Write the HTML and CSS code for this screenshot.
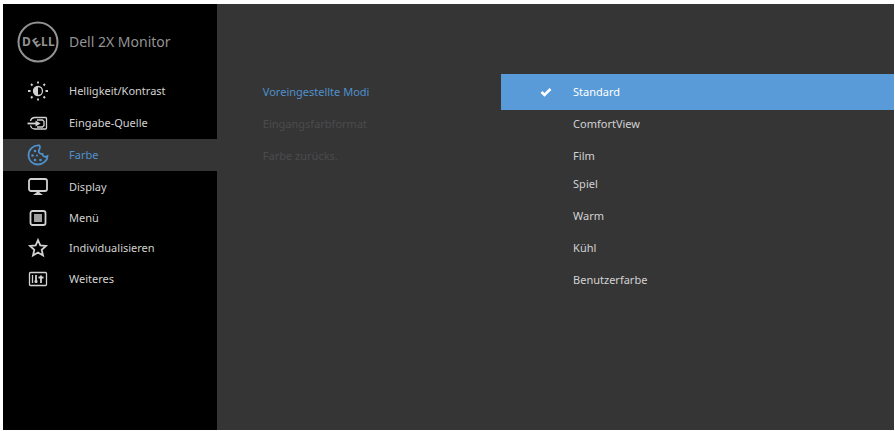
FILE: index.html
```html
<!DOCTYPE html>
<html lang="de">
<head>
<meta charset="utf-8">
<title>Dell 2X Monitor</title>
<link rel="stylesheet" href="styles.css">
</head>
<body>
<main class="osd">
  <aside class="sidebar">
    <header class="brand">
      <svg class="logo" viewBox="0 0 42 42" aria-label="Dell" role="img">
        <circle cx="21" cy="21" r="19.5" fill="none" stroke="currentColor" stroke-width="2"/>
        <text class="wordmark" x="5 19 24 31" y="25 27 25 25" rotate="0 -35 0 0">DELL</text>
      </svg>
      <h1 class="title">Dell 2X Monitor</h1>
    </header>
    <nav class="menu">
      <button class="item" type="button">
        <svg class="icon" viewBox="0 0 22 22"><circle cx="11" cy="11" r="4.500"/><path class="solid" d="M11 6.500a4.500 4.500 0 0 0 0 9z"/><path class="thick" d="M11 1.500v2M11 18.500v2M1 11h2.500M18.500 11h2.500M4 4l1.500 1.500M16.500 16.500L18 18M4 18l1.500-1.500M16.500 5.500L18 4"/></svg>
        <span>Helligkeit/Kontrast</span>
      </button>
      <button class="item" type="button">
        <svg class="icon" viewBox="0 0 22 22"><path d="M3.500 9q.5-3 4-3.500h11q1 0 1 1v9.500q0 1-1 1h-11q-3.500-.5-4-3.500"/><path d="M10 8h5.500l1.500 1.500v4l-1.500 1.500H10"/><path class="thick" d="M.5 11.500h11"/><path class="solid" d="M8.500 8.500l5 3-5 3z"/></svg>
        <span>Eingabe-Quelle</span>
      </button>
      <button class="item active" type="button" aria-current="page">
        <svg class="icon" viewBox="0 0 22 22"><path class="outline" d="M12.500 1.500C6 1 1.500 5.500 1.500 11.500c0 5 4 9 9.500 9 5 0 9.500-4 9.500-8.500-2.500 1.500-5 .5-5-2-3 0-4.500-2-3.500-4 .8-1.500 2-2.500.5-4.500z"/><g class="solid"><circle cx="8" cy="7" r="1.300"/><circle cx="5.500" cy="11.500" r="1.300"/><circle cx="8" cy="16" r="1.300"/><circle cx="13.500" cy="16" r="1.300"/><circle cx="10" cy="11.500" r="1"/></g></svg>
        <span>Farbe</span>
      </button>
      <button class="item" type="button">
        <svg class="icon" viewBox="0 0 22 22"><rect class="outline" x="2" y="3" width="18" height="12" rx="2"/><path class="solid" d="M9.500 15h3v1.500l3.500 2.500H6l3.500-2.500z"/></svg>
        <span>Display</span>
      </button>
      <button class="item compact" type="button">
        <svg class="icon" viewBox="0 0 22 22"><rect class="outline" x="3.500" y="4" width="15" height="14" rx="2"/><path d="M7 8h8M7 10h8M7 12h8M7 14h8"/></svg>
        <span>Menü</span>
      </button>
      <button class="item compact" type="button">
        <svg class="icon" viewBox="0 0 22 22"><path class="outline" d="M11 3l2.300 5.300 5.700.6-4.300 3.900 1.300 5.700-5-3-5 3 1.300-5.700L3 8.900l5.700-.6z"/></svg>
        <span>Individualisieren</span>
      </button>
      <button class="item" type="button">
        <svg class="icon" viewBox="0 0 22 22"><rect x="2.500" y="4.500" width="17" height="13" rx="1"/><path d="M5.500 7v8"/><path class="thick" d="M9 7v8M14 7.500v7.500M7.500 13.500h3M11.500 9.500h5"/></svg>
        <span>Weiteres</span>
      </button>
    </nav>
  </aside>

  <section class="settings">
    <button class="setting current" type="button">Voreingestellte Modi</button>
    <button class="setting" type="button" disabled>Eingangsfarbformat</button>
    <button class="setting" type="button" disabled>Farbe zurücks.</button>
  </section>

  <section class="options">
    <button class="option selected" type="button" aria-pressed="true">
      <svg class="check" viewBox="0 0 12 12"><path d="M1.500 6l3 3L10.500 3"/></svg>
      <span>Standard</span>
    </button>
    <div class="group">
      <button class="option" type="button">ComfortView</button>
      <button class="option" type="button">Film</button>
    </div>
    <div class="group">
      <button class="option" type="button">Spiel</button>
      <button class="option" type="button">Warm</button>
      <button class="option" type="button">Kühl</button>
      <button class="option" type="button">Benutzerfarbe</button>
    </div>
  </section>
</main>
</body>
</html>
```
FILE: styles.css
```css
* {
  box-sizing: border-box;
}

body {
  margin: 0;
  padding: 4px 1px 1px 3px;
  background: #fff;
  font-family: "Noto Sans", "Open Sans", sans-serif;
}

.osd {
  display: grid;
  grid-template-columns: 24% 1fr 44.1%;
  min-height: calc(100vh - 5px);
  background: #353536;
  color: #d2d2d2;
}

button {
  margin: 0;
  padding: 0;
  border: 0;
  background: none;
  color: inherit;
  font: inherit;
  font-size: 11px;
  line-height: 16px;
  text-align: left;
}

.sidebar {
  background: #000;
}

.brand {
  display: flex;
  align-items: center;
  gap: 10px;
  height: 71px;
  padding: 4px 14px 0;
  color: #939393;
}

.logo {
  width: 42px;
  height: 42px;
}

.wordmark {
  fill: currentColor;
  font-size: 12px;
  font-weight: 700;
}

.title {
  margin: 0;
  font-size: 14px;
  font-weight: 400;
  line-height: 20px;
}

.menu {
  display: flex;
  flex-direction: column;
}

.item {
  display: flex;
  align-items: center;
  gap: 20px;
  height: 32px;
  padding-left: 24px;
}

.compact {
  height: 30px;
}

.active {
  background: #353536;
  color: #4f91cc;
}

.icon {
  width: 22px;
  height: 22px;
  fill: none;
  stroke: currentColor;
  stroke-width: 1.3;
}

.outline,
.thick {
  stroke-width: 1.8;
}

.solid {
  fill: currentColor;
  stroke: none;
}

.settings {
  display: flex;
  flex-direction: column;
  padding: 72px 0 0 46px;
}

.setting {
  height: 32px;
}

.setting:disabled {
  color: #4b4b4c;
}

.current {
  color: #4f91cc;
}

.options {
  padding-top: 70px;
}

.group {
  display: flex;
  flex-direction: column;
  gap: 4px;
}

.option {
  height: 28px;
  padding-left: 72px;
}

.selected {
  display: flex;
  align-items: center;
  gap: 21px;
  width: 100%;
  height: 36px;
  padding-left: 39px;
  background: #589bd8;
  color: #fff;
}

.check {
  width: 12px;
  height: 12px;
  fill: none;
  stroke: currentColor;
  stroke-width: 2.6;
}
```
